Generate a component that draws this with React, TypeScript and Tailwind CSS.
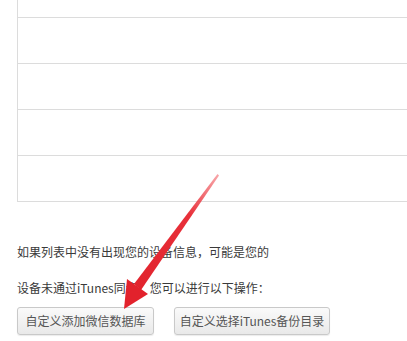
import React from 'react';

const rows = [17, 46, 46, 46, 46];

const Arrow: React.FC = () => (
  <svg className="absolute left-0 top-0 pointer-events-none" width="407" height="341" viewBox="0 0 407 341">
    <defs>
      <linearGradient id="ar" x1="218" y1="175" x2="125" y2="308" gradientUnits="userSpaceOnUse">
        <stop offset="0" stopColor="#f04a50" stopOpacity="0.5" />
        <stop offset="0.3" stopColor="#e8303a" />
        <stop offset="1" stopColor="#e0202a" />
      </linearGradient>
    </defs>
    {/* shaft tapers to a point at the tail */}
    <polygon points="217.5,174 219,175.5 141,290 134,284" fill="url(#ar)" />
    {/* head */}
    <polygon points="124,309 127,279 148,294" fill="#e2222c" />
  </svg>
);

const App: React.FC = () => {
  return (
    <div className="relative w-[407px] h-[341px] overflow-hidden bg-white font-['Noto_Sans_CJK_SC',sans-serif] text-[12px] text-[#333]">
      {/* list box, scrolled so only its lower rows show */}
      <div className="ml-[17px] flex flex-col border-l border-b border-[#dcdcdc]">
        {rows.map((h, i) => (
          <div
            key={i}
            className={i === 0 ? 'h-[17px]' : 'h-[46px] border-t border-[#dcdcdc]'}
          />
        ))}
      </div>

      <div className="ml-[17px] mt-[41px] leading-[18px] text-[#3a3a3a]">
        <p>如果列表中没有出现您的设备信息，可能是您的</p>
        <p className="mt-[18px]">设备未通过iTunes同步，您可以进行以下操作：</p>
      </div>

      <div className="ml-[17px] mt-[10px] flex gap-[20px]">
        <button className="h-[28px] w-[137px] rounded-[3px] border border-[#c9c9c9] bg-gradient-to-b from-[#fafafa] to-[#e9e9e9] text-[12px] text-[#555] shadow-[0_1px_1px_rgba(0,0,0,0.08)]">
          自定义添加微信数据库
        </button>
        <button className="h-[28px] w-[156px] rounded-[3px] border border-[#c9c9c9] bg-gradient-to-b from-[#fafafa] to-[#e9e9e9] text-[12px] text-[#555] shadow-[0_1px_1px_rgba(0,0,0,0.08)]">
          自定义选择iTunes备份目录
        </button>
      </div>

      <Arrow />
    </div>
  );
};

export default App;
